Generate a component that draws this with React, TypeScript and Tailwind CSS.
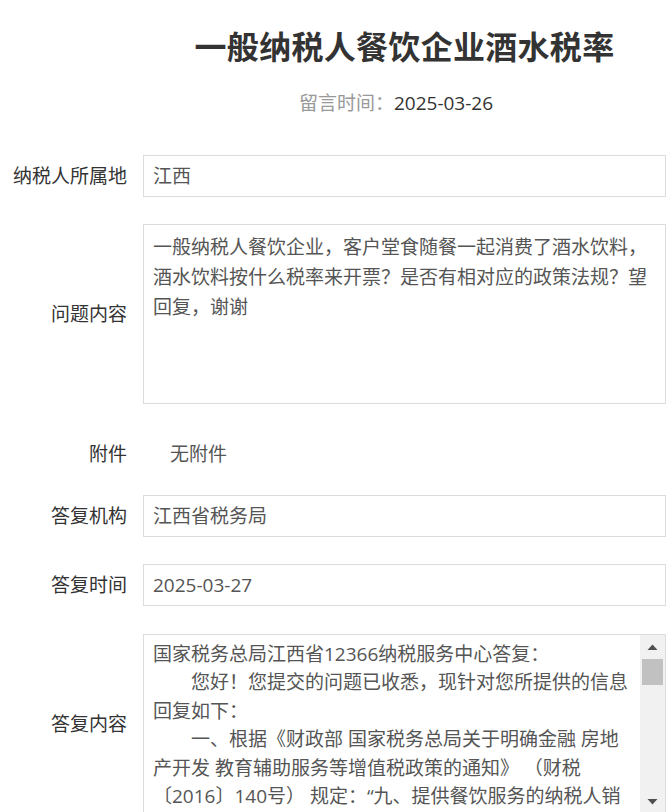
import React from "react";

const FONT = { fontFamily: '"Open Sans","Noto Sans CJK SC",sans-serif' };

function Label({ children }: { children: React.ReactNode }) {
  return (
    <div className="w-[127px] shrink-0 text-right text-[19px] text-[#333] leading-[28px]">
      {children}
    </div>
  );
}

function InputRow({ label, value, className = "" }: { label: string; value: string; className?: string }) {
  return (
    <div className={"flex items-center gap-[16px] pr-[6px] " + className}>
      <Label>{label}</Label>
      <div className="flex-1 h-[42px] border border-[#dcdcdc] bg-white flex items-center pl-[9px] text-[19px] text-[#555]">
        {value}
      </div>
    </div>
  );
}

const answerLines = [
  "国家税务总局江西省12366纳税服务中心答复：",
  "\u3000\u3000您好！您提交的问题已收悉，现针对您所提供的信息",
  "回复如下：",
  "\u3000\u3000一、根据《财政部 国家税务总局关于明确金融 房地",
  "产开发 教育辅助服务等增值税政策的通知》 （财税",
  "〔2016〕140号） 规定：“九、提供餐饮服务的纳税人销",
  "售的外卖食品，按照‘餐饮服务’缴纳增值税。”",
  "\u3000\u3000二、根据《中华人民共和国增值税暂行条例》",
];

export default function App() {
  return (
    <div className="w-[672px] bg-white" style={FONT}>
      <div className="ml-[143px] mr-[6px] pt-[23px]">
        <h1 className="text-center text-[32px] font-bold text-[#333] leading-[48px] tracking-[0.3px]">
          一般纳税人餐饮企业酒水税率
        </h1>
        <div className="mt-[18px] pr-[17px] text-center text-[19px] leading-[28px]">
          <span className="text-[#999]">留言时间：</span>
          <span className="text-[#333]">2025-03-26</span>
        </div>
      </div>

      <div className="mt-[38px] flex flex-col">
        <InputRow label="纳税人所属地" value="江西" />

        <div className="mt-[27px] flex items-center gap-[16px] pr-[6px]">
          <Label>问题内容</Label>
          <div className="flex-1 h-[180px] border border-[#dcdcdc] bg-white pl-[9px] pr-[9px] pt-[7px] text-[19px] leading-[30px] text-[#555] whitespace-pre-wrap">
            一般纳税人餐饮企业，客户堂食随餐一起消费了酒水饮料，酒水饮料按什么税率来开票？是否有相对应的政策法规？望回复，谢谢
          </div>
        </div>

        <div className="mt-[29px] h-[42px] flex items-center gap-[16px] pr-[6px]">
          <Label>附件</Label>
          <div className="pl-[27px] text-[19px] text-[#555]">无附件</div>
        </div>

        <InputRow className="mt-[20px]" label="答复机构" value="江西省税务局" />
        <InputRow className="mt-[27px]" label="答复时间" value="2025-03-27" />

        <div className="mt-[28px] flex items-center gap-[16px] pr-[6px]">
          <Label>答复内容</Label>
          <div className="flex-1 h-[180px] border border-[#dcdcdc] bg-white flex overflow-hidden">
            <div className="flex-1 overflow-hidden pl-[9px] pt-[5px] text-[19px] leading-[28.4px] text-[#555]">
              {answerLines.map((l, i) => (
                <div key={i} className="whitespace-pre">
                  {l}
                </div>
              ))}
            </div>
            <div className="w-[25px] shrink-0 bg-[#f1f1f1] flex flex-col items-center">
              <div className="h-[24px] w-full flex items-center justify-center">
                <svg width="11" height="7" viewBox="0 0 11 7">
                  <polygon points="5.5,0.5 10.5,6 0.5,6" fill="#505050" />
                </svg>
              </div>
              <div className="w-[21px] h-[26px] bg-[#c1c1c1]" />
              <div className="flex-1" />
              <div className="h-[24px] w-full flex items-center justify-center">
                <svg width="11" height="7" viewBox="0 0 11 7">
                  <polygon points="0.5,1 10.5,1 5.5,6.5" fill="#505050" />
                </svg>
              </div>
            </div>
          </div>
        </div>
        <div className="h-[40px]" />
      </div>
    </div>
  );
}
